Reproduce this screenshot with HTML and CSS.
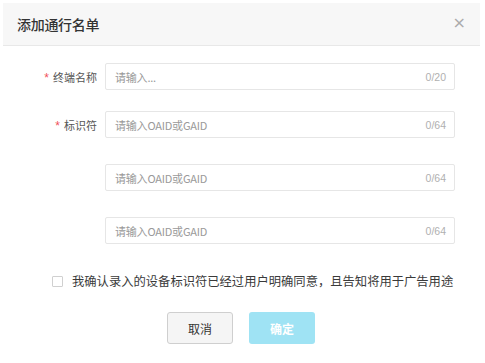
FILE: index.html
```html
<!DOCTYPE html>
<html lang="zh">
<head>
<meta charset="utf-8">
<link rel="stylesheet" href="styles.css">
</head>
<body>
<div class="dialog">
  <div class="header">
    <span class="title">添加通行名单</span>
    <span class="close">×</span>
  </div>
  <div class="form">
    <div class="row r1">
      <div class="label"><span class="star">*</span>终端名称</div>
      <div class="input"><span class="ph">请输入...</span><span class="count">0/20</span></div>
    </div>
    <div class="row r2">
      <div class="label"><span class="star">*</span>标识符</div>
      <div class="input"><span class="ph">请输入OAID或GAID</span><span class="count">0/64</span></div>
    </div>
    <div class="row r3">
      <div class="label"></div>
      <div class="input"><span class="ph">请输入OAID或GAID</span><span class="count">0/64</span></div>
    </div>
    <div class="row r4">
      <div class="label"></div>
      <div class="input"><span class="ph">请输入OAID或GAID</span><span class="count">0/64</span></div>
    </div>
  </div>
  <div class="agree">
    <span class="box"></span>
    <span class="agree-text">我确认录入的设备标识符已经过用户明确同意，且告知将用于广告用途</span>
  </div>
  <div class="buttons">
    <div class="btn cancel">取消</div>
    <div class="btn ok">确定</div>
  </div>
</div>
</body>
</html>
```
FILE: styles.css
```css
html, body {
  margin: 0;
  padding: 0;
  background: #fff;
}
body {
  font-family: "Noto Sans CJK SC", "Liberation Sans", sans-serif;
  color: #333;
}
.dialog {
  width: 477px;
  padding: 3px 5px 0 3px;
}
.header {
  height: 43px;
  background: #f7f7f7;
  border-bottom: 1px solid #e8e8e8;
  display: flex;
  align-items: center;
  justify-content: space-between;
  padding: 0 14px 0 14px;
  box-sizing: border-box;
}
.title {
  font-size: 14px;
  font-weight: 500;
  color: #333;
  letter-spacing: -0.3px;
}
.close {
  font-family: "DejaVu Sans", sans-serif;
  font-size: 16px;
  color: #ababab;
  line-height: 1;
  margin-top: -3px;
}
.form {
  display: flex;
  flex-direction: column;
}
.row {
  display: flex;
  align-items: center;
}
.r1 { margin-top: 17px; }
.r2 { margin-top: 21px; }
.r3 { margin-top: 26px; }
.r4 { margin-top: 26px; }
.label {
  width: 94px;
  flex: none;
  text-align: right;
  font-size: 11px;
  color: #555;
  margin-right: 8px;
}
.star {
  color: #f0505a;
  margin-right: 4px;
  font-family: "Liberation Sans", sans-serif;
  font-size: 12px;
}
.input {
  width: 350px;
  height: 27px;
  box-sizing: border-box;
  border: 1px solid #e6e6e6;
  border-radius: 2px;
  display: flex;
  align-items: center;
  justify-content: space-between;
  padding: 0 8px 0 9px;
}
.ph {
  font-size: 11px;
  color: #999;
  letter-spacing: -0.2px;
}
.count {
  font-family: "Liberation Sans", sans-serif;
  font-size: 10.5px;
  color: #b0b0b0;
}
.agree {
  display: flex;
  align-items: center;
  margin-top: 28px;
  padding-left: 49px;
}
.box {
  width: 11px;
  height: 11px;
  border: 1px solid #d0d0d0;
  border-radius: 1px;
  box-sizing: border-box;
  margin-right: 9px;
  flex: none;
}
.agree-text {
  font-size: 12.3px;
  color: #3a3a3a;
  white-space: nowrap;
}
.buttons {
  display: flex;
  margin-top: 22px;
  padding-left: 164px;
  gap: 16px;
}
.btn {
  width: 66px;
  height: 32px;
  box-sizing: border-box;
  border-radius: 3px;
  display: flex;
  align-items: center;
  justify-content: center;
  font-size: 12px;
}
.cancel {
  border: 1px solid #cfcfcf;
  background: #f5f5f5;
  color: #333;
}
.ok {
  background: #9fe3f4;
  color: #fff;
  font-weight: 600;
}
```
